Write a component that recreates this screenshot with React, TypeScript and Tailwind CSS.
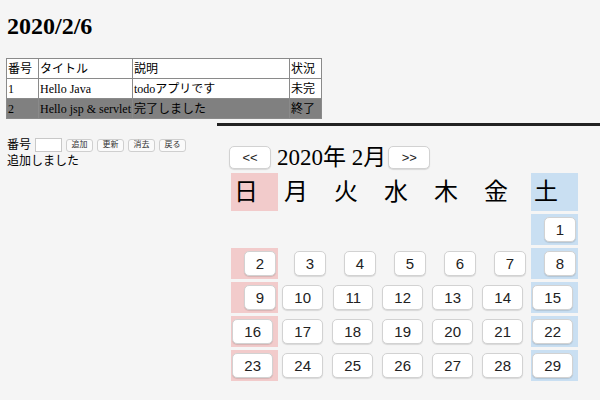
import React from 'react'

const serif = "font-['Liberation_Serif','Noto_Sans_CJK_JP',serif]"
const sans = "font-['Liberation_Sans','Noto_Sans_CJK_JP',sans-serif]"

const todos = [
  { id: 1, title: 'Hello Java', desc: 'todoアプリです', status: '未完', done: false },
  { id: 2, title: 'Hello jsp & servlet', desc: '完了しました', status: '終了', done: true },
]

const weekdays = ['日', '月', '火', '水', '木', '金', '土']

// Feb 2020 starts on a Saturday
const weeks: (number | null)[][] = [
  [null, null, null, null, null, null, 1],
  [2, 3, 4, 5, 6, 7, 8],
  [9, 10, 11, 12, 13, 14, 15],
  [16, 17, 18, 19, 20, 21, 22],
  [23, 24, 25, 26, 27, 28, 29],
]

function DayCell({ day, col }: { day: number | null; col: number }) {
  if (!day) return <div className="h-[31px]" />
  const bg = col === 0 ? 'bg-[#f2cbcb]' : col === 6 ? 'bg-[#c9dff2]' : ''
  return (
    <div className={`h-[31px] flex items-center justify-end ${day < 10 ? 'pr-[2px]' : 'pr-[5px]'} ${bg}`}>
      <button
        type="button"
        className={`h-[25px] px-[11px] rounded-[5px] border border-[#d2d2d2] bg-white text-[15px] leading-none text-[#222] shadow-[0_1px_1px_rgba(0,0,0,0.12)] ${sans}`}
      >
        {day}
      </button>
    </div>
  )
}

function NavButton({ label }: { label: string }) {
  return (
    <button
      type="button"
      className={`h-[23px] w-[42px] rounded-[5px] border border-[#d2d2d2] bg-white text-[13px] leading-none text-[#222] shadow-[0_1px_1px_rgba(0,0,0,0.12)] ${sans}`}
    >
      {label}
    </button>
  )
}

export default function App() {
  const cell = 'border border-[#8a8a8a] px-[1px] h-[20px] text-left font-normal whitespace-nowrap'

  return (
    <div className={`h-[400px] w-full overflow-hidden bg-[#f5f5f5] text-black ${serif}`}>
      <h1 className="pl-[7px] pt-[12px] text-[24px] leading-[28px] font-bold">2020/2/6</h1>

      <table className="mt-[18px] ml-[6px] w-[315px] table-fixed border-collapse border border-[#555] text-[12px] leading-none">
        <colgroup>
          <col className="w-[32px]" />
          <col className="w-[94px]" />
          <col className="w-[157px]" />
          <col className="w-[32px]" />
        </colgroup>
        <thead>
          <tr className="bg-white">
            <th className={cell}>番号</th>
            <th className={cell}>タイトル</th>
            <th className={cell}>説明</th>
            <th className={cell}>状況</th>
          </tr>
        </thead>
        <tbody>
          {todos.map((t) => (
            <tr key={t.id} className={t.done ? 'bg-[#808080]' : 'bg-white'}>
              <td className={cell}>{t.id}</td>
              <td className={cell}>{t.title}</td>
              <td className={cell}>{t.desc}</td>
              <td className={cell}>{t.status}</td>
            </tr>
          ))}
        </tbody>
      </table>

      <div className="mt-[4px] flex">
        <div className="w-[217px] pl-[7px] pt-[14px] text-[12px]">
          <div className="flex h-[16px] items-center">
            <span className="mr-[4px]">番号</span>
            <input type="text" className="h-[14px] w-[27px] border border-[#c8c8c8] bg-white" />
            <div className={`ml-[4px] flex gap-[4px] ${sans}`}>
              {['追加', '更新', '消去', '戻る'].map((b) => (
                <button
                  key={b}
                  type="button"
                  className="h-[13px] w-[27px] rounded-[3px] border border-[#cfcfcf] bg-[#fafafa] text-[8px] leading-none text-[#333]"
                >
                  {b}
                </button>
              ))}
            </div>
          </div>
          <p className="leading-[16px]">追加しました</p>
        </div>

        <div className="flex-1 border-t-[3px] border-[#222] pl-[12px] pt-[20px]">
          <div className="flex h-[23px] items-center">
            <NavButton label="<<" />
            <span className="ml-[6px] mr-[2px] text-[23px] leading-[23px]">2020年 2月</span>
            <NavButton label=">>" />
          </div>

          <div className="ml-[2px] mt-[4px] grid grid-cols-[repeat(7,47px)] gap-[3px]">
            {weekdays.map((w, i) => (
              <div
                key={w}
                className={`flex h-[38px] items-center pl-[3px] text-[24px] leading-none ${
                  i === 0 ? 'bg-[#f2cbcb]' : i === 6 ? 'bg-[#c9dff2]' : ''
                }`}
              >
                {w}
              </div>
            ))}
            {weeks.map((week, r) =>
              week.map((d, c) => <DayCell key={`${r}-${c}`} day={d} col={c} />)
            )}
          </div>
        </div>
      </div>
    </div>
  )
}
